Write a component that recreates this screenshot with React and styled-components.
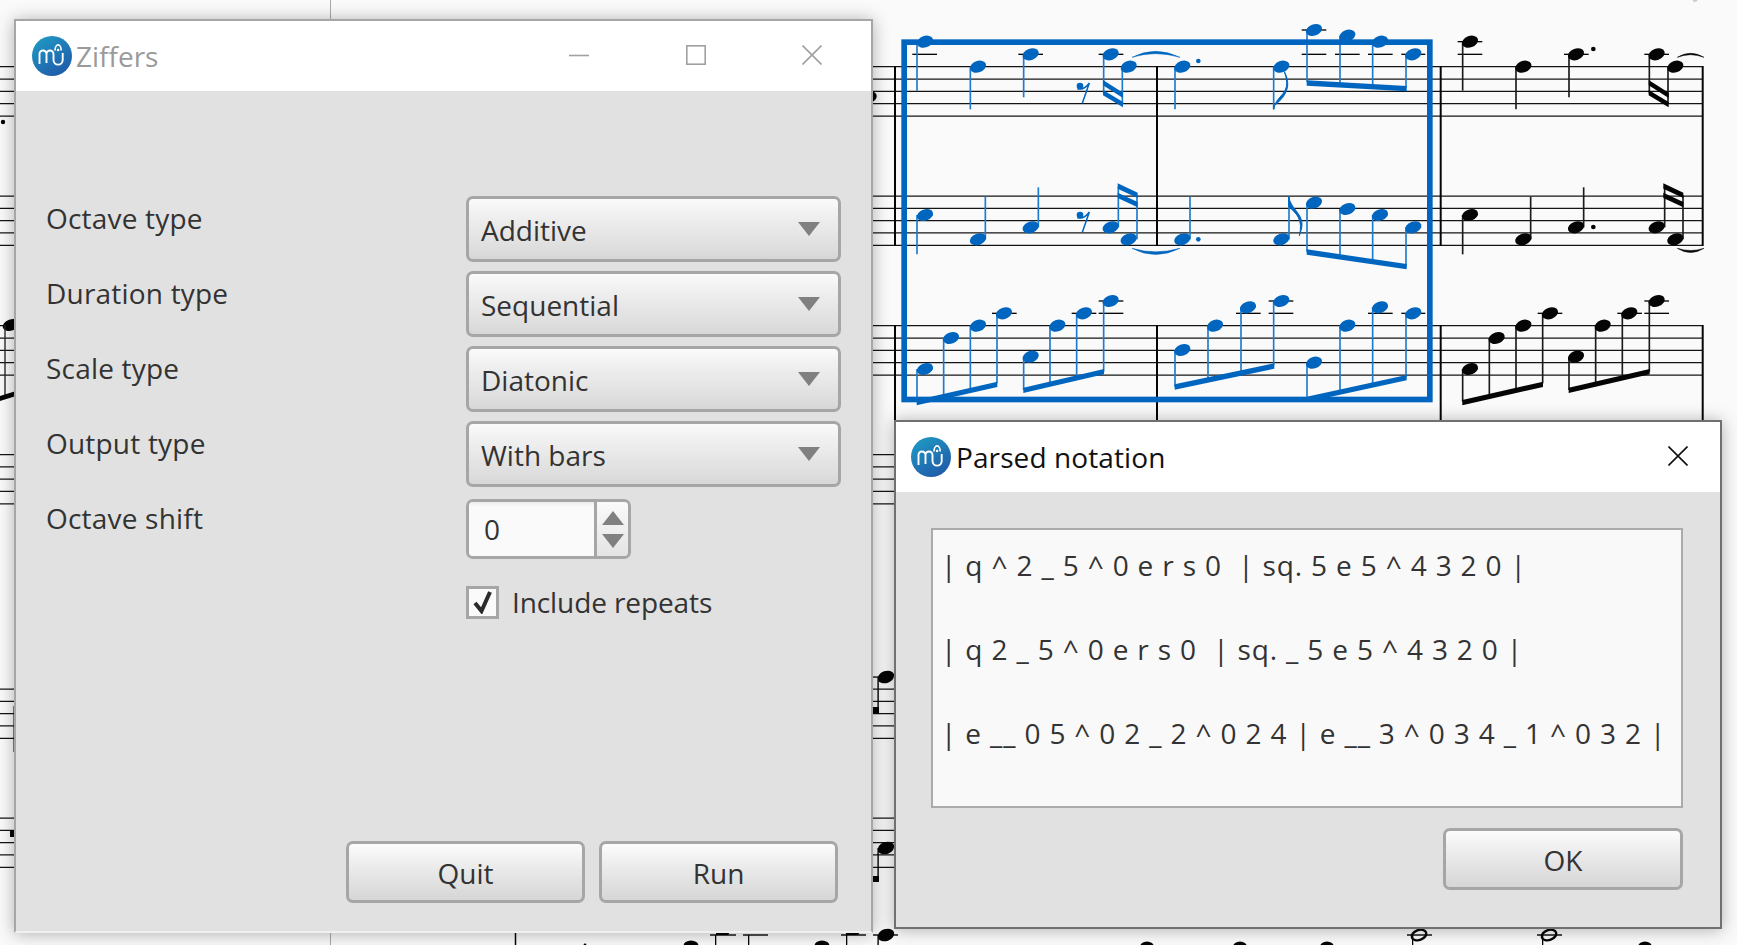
import React from "react";
import styled, { createGlobalStyle } from "styled-components";

const Global = createGlobalStyle`
  html, body { margin: 0; padding: 0; background: #fafafa; overflow: hidden; }
  * { box-sizing: border-box; }
`;

const Desktop = styled.div`
  position: relative;
  width: 1737px;
  height: 945px;
  overflow: hidden;
  background: #fafafa;
  font-family: "Open Sans", "Noto Sans", sans-serif;
  color: #333;
`;
const ScoreSvg = styled.svg`
  display: block;
`;
const Window = styled.section`
  position: absolute;
  left: ${(p) => p.$left}px;
  top: ${(p) => p.$top}px;
  width: ${(p) => p.$width}px;
  height: ${(p) => p.$height}px;
  display: flex;
  flex-direction: column;
  background: #e1e1e1;
  border: 2px solid ${(p) => p.$edge};
  border-bottom-color: ${(p) => p.$foot};
  box-shadow: 0 1px 16px rgba(0, 0, 0, 0.3);
`;
const TitleBar = styled.header`
  flex: none;
  height: 70px;
  display: flex;
  align-items: center;
  background: #fff;
  padding: 0 ${(p) => p.$padRight}px 0 ${(p) => p.$padLeft}px;
`;
const Title = styled.h1`
  margin: 0 0 0 ${(p) => p.$gap}px;
  font-size: 28px;
  font-weight: 400;
  letter-spacing: ${(p) => p.$track}px;
  color: ${(p) => p.$color};
`;
const WinControls = styled.div`
  margin-left: auto;
  display: flex;
  gap: ${(p) => p.$gap}px;
  margin-bottom: 3px;
`;
const Glyph = styled.svg`
  display: block;
  fill: none;
  stroke: ${(p) => p.$color};
  stroke-width: 1.6;
`;
const MainBody = styled.div`
  flex: 1;
  display: flex;
  flex-direction: column;
  padding: 105px 33px 28px 30px;
`;
const FormGrid = styled.div`
  display: grid;
  grid-template-columns: 420px 375px;
  grid-auto-rows: auto;
  row-gap: 9px;
`;
const FieldLabel = styled.div`
  font-size: 28px;
  line-height: 34px;
  letter-spacing: 0.2px;
  padding-top: 5px;
`;
const Select = styled.div`
  height: 66px;
  display: flex;
  align-items: center;
  justify-content: space-between;
  padding: 2px 18px 0 12px;
  border: 3px solid #a6a6a6;
  border-radius: 7px;
  font-size: 28px;
  background: linear-gradient(#fbfbfb, #f2f2f2 20%, #dcdcdc 88%, #d6d6d6);
`;
const Caret = styled.span`
  width: 0;
  height: 0;
  margin-bottom: 2px;
  border-left: 11px solid transparent;
  border-right: 11px solid transparent;
  border-top: 14px solid #808080;
`;
const Spinner = styled.div`
  width: 165px;
  height: 60px;
  margin-top: 3px;
  display: flex;
  border: 3px solid #a6a6a6;
  border-radius: 7px;
  overflow: hidden;
`;
const SpinValue = styled.div`
  width: 128px;
  display: flex;
  align-items: center;
  padding-left: 15px;
  font-size: 28px;
  background: linear-gradient(#ececec, #fafafa 8%);
  border-right: 3px solid #a6a6a6;
`;
const SpinArrows = styled.div`
  flex: 1;
  display: flex;
  flex-direction: column;
  align-items: center;
  justify-content: center;
  gap: 9px;
  background: linear-gradient(#fafafa, #e4e4e4);
`;
const ArrowUp = styled.span`
  width: 0;
  height: 0;
  border-left: 11px solid transparent;
  border-right: 11px solid transparent;
  border-bottom: 14px solid #808080;
`;
const ArrowDown = styled(ArrowUp)`
  border-bottom: 0;
  border-top: 14px solid #808080;
`;
const CheckRow = styled.div`
  grid-column: 2;
  margin-top: 15px;
  display: flex;
  align-items: center;
  gap: 13px;
  font-size: 28px;
  letter-spacing: -0.1px;
`;
const CheckBox = styled.span`
  flex: none;
  width: 33px;
  height: 33px;
  border: 3px solid #a6a6a6;
  background: #fafafa;
  display: flex;
  align-items: center;
  justify-content: center;
`;
const Footer = styled.div`
  margin-top: auto;
  display: flex;
  justify-content: flex-end;
  gap: 14px;
`;
const Button = styled.button`
  width: ${(p) => p.$w || 239}px;
  height: 62px;
  padding: 2px 0 0;
  border: 3px solid #a6a6a6;
  border-radius: 7px;
  font-family: inherit;
  font-size: 28px;
  color: #333;
  background: linear-gradient(#fcfcfc, #efefef 30%, #dadada 88%, #d6d6d6);
`;
const DialogBody = styled.div`
  flex: 1;
  display: flex;
  flex-direction: column;
  padding: 36px 37px 37px 35px;
`;
const ParsedBox = styled.div`
  flex: none;
  height: 280px;
  padding: 0 0 0 8px;
  display: flex;
  flex-direction: column;
  gap: 14px;
  border: 2px solid #ababab;
  background: #f9f9f9;
`;
const ParsedLine = styled.div`
  height: 70px;
  line-height: 70px;
  white-space: pre;
  font-size: 28px;
  letter-spacing: 0.85px;
  color: #333;
`;

const BLUE = "#0065bf";
const BLACK = "#050505";

const Logo = () => (
  <svg width="40" height="40" viewBox="0 0 40 40" style={{ flex: "none", display: "block" }}>
    <defs>
      <linearGradient id="lg" x1="0.15" y1="0" x2="0.8" y2="1">
        <stop offset="0" stopColor="#1f9ac4" />
        <stop offset="1" stopColor="#2058a8" />
      </linearGradient>
    </defs>
    <circle cx="20" cy="20" r="20" fill="url(#lg)" />
    <path
      d="M7.5 28V18a3.5 3.5 0 0 1 7 0v9M14.5 18a3.5 3.5 0 0 1 7 0v6a4.6 4.6 0 0 0 9.2 0V17"
      fill="none"
      stroke="#fff"
      strokeWidth="1.9"
    />
    <path d="M23 14.5a3.1 5.6 0 0 1 6.2 0" fill="none" stroke="#fff" strokeWidth="1.7" />
    <circle cx="26.1" cy="14" r="1.3" fill="#fff" />
  </svg>
);

const Head = ({ x, y, c }) => (
  <ellipse cx={x} cy={y} rx="25" ry="17" transform={`rotate(-20 ${x} ${y})`} fill={c} />
);

// [head x, head y, stem x, stem end y]
const blueNotes = [
  [135, 125, 111, 272], [294, 200, 271, 328], [452, 163, 431, 292], [692, 163, 671, 280], [746, 200, 727, 312],
  [907, 200, 885, 328], [1204, 200, 1181, 328], [1302, 90, 1281, 245], [1402, 107, 1380, 250], [1500, 125, 1478, 255], [1600, 163, 1578, 262],
  [135, 645, 111, 763], [294, 718, 316, 590], [452, 682, 475, 562], [692, 682, 715, 560], [746, 718, 771, 585],
  [907, 718, 930, 590], [1204, 718, 1227, 590], [1302, 608, 1281, 755], [1402, 627, 1380, 770], [1500, 645, 1478, 785], [1600, 682, 1578, 800],
  [135, 1107, 111, 1205], [213, 1014, 191, 1185], [294, 977, 271, 1170], [372, 940, 351, 1150],
  [452, 1070, 431, 1170], [532, 977, 510, 1150], [612, 940, 590, 1130], [692, 903, 671, 1115],
  [907, 1050, 885, 1160], [1005, 977, 984, 1135], [1104, 922, 1083, 1115], [1204, 903, 1181, 1095],
  [1302, 1088, 1281, 1190], [1402, 977, 1380, 1170], [1500, 922, 1478, 1150], [1600, 940, 1578, 1130],
];
const blackNotes = [
  [1770, 125, 1748, 272], [1930, 200, 1908, 328], [2088, 163, 2067, 292], [2330, 163, 2308, 280], [2386, 200, 2364, 312],
  [1770, 645, 1748, 763], [1930, 718, 1952, 590], [2088, 682, 2111, 562], [2330, 682, 2354, 560], [2386, 718, 2409, 585],
  [1770, 1107, 1748, 1205], [1850, 1014, 1828, 1185], [1930, 977, 1908, 1170], [2010, 940, 1988, 1150],
  [2088, 1070, 2067, 1170], [2168, 977, 2147, 1150], [2248, 940, 2227, 1130], [2330, 903, 2308, 1115],
];
const ledgers = [
  [97, 171, 163], [415, 489, 163], [656, 730, 163], [1265, 1339, 163], [1365, 1439, 163], [1464, 1538, 163], [1564, 1636, 163],
  [1265, 1339, 90], [336, 410, 940], [575, 649, 940], [656, 730, 940], [656, 730, 903], [1068, 1142, 940], [1166, 1240, 940], [1166, 1240, 903],
  [1464, 1538, 940], [1564, 1636, 940],
  [1733, 1807, 125], [1733, 1807, 163], [2052, 2126, 163], [2293, 2367, 163],
  [1973, 2047, 940], [2212, 2286, 940], [2293, 2367, 940], [2293, 2367, 903],
];
const beam = (x1, y1, x2, y2, t = 16) => `${x1},${y1} ${x2},${y2} ${x2},${y2 + t} ${x1},${y1 + t}`;
const beamsBlue = [
  beam(669, 240, 729, 278), beam(669, 270, 729, 306), beam(713, 550, 773, 578), beam(713, 578, 773, 606),
  beam(1280, 241, 1580, 258), beam(1280, 748, 1580, 792),
  beam(110, 1200, 352, 1145), beam(430, 1163, 672, 1107), beam(884, 1153, 1183, 1090), beam(1280, 1190, 1580, 1125),
];
const beamsBlack = [
  beam(2306, 240, 2366, 278), beam(2306, 270, 2366, 306), beam(2350, 550, 2410, 578), beam(2350, 578, 2410, 606),
  beam(1747, 1200, 1989, 1145), beam(2066, 1163, 2309, 1107),
];
const STAVES = [66.7, 196, 325.7, 454.5, 689, 818];

const Rest = ({ y }) => (
  <g>
    <circle cx="600" cy={y} r="10" fill={BLUE} />
    <path d={`M592 ${y + 8}Q612 ${y + 14} 628 ${y - 9}L607 ${y + 52}`} fill="none" stroke={BLUE} strokeWidth="4.5" />
  </g>
);

const Score = () => (
  <ScoreSvg width="1737" height="945" viewBox="0 0 1737 945">
    {STAVES.map((top) =>
      [0, 1, 2, 3, 4].map((i) => (
        <line key={`${top}${i}`} x1="0" x2="1703" y1={top + i * 12.33} y2={top + i * 12.33} stroke="#141414" strokeWidth="1.25" />
      ))
    )}
    {[895, 1157, 1440.7, 1702.7].map((x) => (
      <g key={x} stroke={BLACK} strokeWidth="2">
        <line x1={x} x2={x} y1="66" y2="246" />
        <line x1={x} x2={x} y1="325" y2="425" />
      </g>
    ))}
    <line x1="330.5" x2="330.5" y1="0" y2="945" stroke="#aaa" strokeWidth="1" />
    <line x1="515.5" x2="515.5" y1="600" y2="945" stroke={BLACK} strokeWidth="1.5" />

    <g transform="translate(880 0) scale(0.33333)">
      {ledgers.map(([a, b, y]) => (
        <line key={`${a}${y}`} x1={a} x2={b} y1={y} y2={y} stroke={BLACK} strokeWidth="4" />
      ))}
      {blackNotes.map(([x, y, sx, e]) => (
        <g key={`${x}${y}`}>
          <line x1={sx} x2={sx} y1={y} y2={e} stroke="#1c1c1c" strokeWidth="5" />
          <Head x={x} y={y} c={BLACK} />
        </g>
      ))}
      {beamsBlack.map((p) => (
        <polygon key={p} points={p} fill={BLACK} />
      ))}
      <circle cx="2140" cy="147" r="7" fill={BLACK} />
      <circle cx="2140" cy="681" r="7" fill={BLACK} />
      <path d="M2392 172Q2432 148 2472 172Q2432 156 2392 172Z" fill={BLACK} stroke={BLACK} strokeWidth="1.5" />
      <path d="M2392 745Q2432 770 2472 745Q2432 758 2392 745Z" fill={BLACK} stroke={BLACK} strokeWidth="1.5" />

      {blueNotes.map(([x, y, sx, e]) => (
        <g key={`${x}${y}`}>
          <line x1={sx} x2={sx} y1={y} y2={e} stroke="#1f7ccd" strokeWidth="5" />
          <Head x={x} y={y} c={BLUE} />
        </g>
      ))}
      {beamsBlue.map((p) => (
        <polygon key={p} points={p} fill={BLUE} />
      ))}
      <Rest y={258} />
      <Rest y={645} />
      <circle cx="955" cy="183" r="7" fill={BLUE} />
      <circle cx="955" cy="718" r="7" fill={BLUE} />
      <path d="M756 172Q826 136 900 172Q826 150 756 172Z" fill={BLUE} stroke={BLUE} strokeWidth="1.5" />
      <path d="M756 745Q826 782 900 745Q826 766 756 745Z" fill={BLUE} stroke={BLUE} strokeWidth="1.5" />
      <path d="M1181 328C1186 290 1222 285 1220 248C1220 235 1216 225 1213 215C1232 250 1226 285 1181 318Z" fill={BLUE} stroke={BLUE} strokeWidth="3" />
      <path d="M1226 590C1232 625 1266 640 1266 672C1266 685 1262 695 1258 707C1270 660 1250 640 1226 620Z" fill={BLUE} stroke={BLUE} strokeWidth="3" />
      <rect x="72.5" y="126.5" width="1577" height="1072" fill="none" stroke={BLUE} strokeWidth="17" />
    </g>

    {/* other systems, seen beside and below the windows */}
    <g fill={BLACK} stroke="none">
      <circle cx="3" cy="122" r="2.2" />
      <ellipse cx="869" cy="97.5" rx="8" ry="5.6" transform="rotate(-20 869 97.5)" />
      <ellipse cx="11" cy="325" rx="8.5" ry="5.6" transform="rotate(-20 11 325)" />
      <rect x="4.3" y="325" width="1.4" height="70" fill="#2a2a2a" />
      <polygon points="0,396 16,391 16,396 0,401" />
      <rect x="13.5" y="706" width="2" height="46" />
      <rect x="10" y="830" width="6" height="7" />
      <ellipse cx="886" cy="677" rx="8.5" ry="6" transform="rotate(-20 886 677)" />
      <rect x="873" y="676.4" width="8" height="1.3" />
      <rect x="877.4" y="677" width="1.4" height="36" />
      <rect x="872" y="707" width="7" height="6.5" />
      <ellipse cx="886" cy="848" rx="8.5" ry="6" transform="rotate(-20 886 848)" />
      <rect x="877.4" y="848" width="1.4" height="33" />
      <rect x="872" y="876" width="7" height="6" />
      <ellipse cx="886" cy="935" rx="8.5" ry="6" transform="rotate(-20 886 935)" />
      <rect x="873" y="934.3" width="25" height="1.4" />
      <rect x="877.4" y="935" width="1.4" height="10" />
      <ellipse cx="691" cy="946" rx="7.5" ry="5.5" />
      <ellipse cx="822" cy="946" rx="7.5" ry="5.5" />
      <circle cx="585" cy="945" r="1.4" />
      <rect x="710" y="934.3" width="26" height="1.4" />
      <polygon points="716,932 730,932 728,935 716,935" />
      <rect x="715" y="935" width="1.3" height="10" />
      <rect x="743" y="934.3" width="25" height="1.4" />
      <rect x="748" y="935" width="1.3" height="10" />
      <rect x="841" y="934.3" width="25" height="1.4" />
      <polygon points="846,932 860,932 858,935 846,935" />
      <rect x="846" y="935" width="1.3" height="10" />
      <ellipse cx="1147" cy="947" rx="7" ry="5.5" />
      <ellipse cx="1240" cy="947" rx="7" ry="5.5" />
      <ellipse cx="1327" cy="947" rx="7" ry="5.5" />
      <ellipse cx="1645" cy="947" rx="7" ry="5.5" />
      <rect x="1407" y="934.3" width="25" height="1.4" />
      <rect x="1537" y="934.3" width="25" height="1.4" />
      <rect x="1412" y="935" width="1.3" height="10" />
      <rect x="1542" y="935" width="1.3" height="10" />
    </g>
    <ellipse cx="1419" cy="935" rx="7.5" ry="5" fill="none" stroke={BLACK} strokeWidth="2.4" transform="rotate(-20 1419 935)" />
    <ellipse cx="1549" cy="935" rx="7.5" ry="5" fill="none" stroke={BLACK} strokeWidth="2.4" transform="rotate(-20 1549 935)" />
    <circle cx="1695" cy="-0.5" r="2.5" fill="#ccc" />
  </ScoreSvg>
);

const fields = [
  ["Octave type", "Additive"],
  ["Duration type", "Sequential"],
  ["Scale type", "Diatonic"],
  ["Output type", "With bars"],
];
const parsed = [
  "| q ^ 2 _ 5 ^ 0 e r s 0  | sq. 5 e 5 ^ 4 3 2 0 |",
  "| q 2 _ 5 ^ 0 e r s 0  | sq. _ 5 e 5 ^ 4 3 2 0 |",
  "| e __ 0 5 ^ 0 2 _ 2 ^ 0 2 4 | e __ 3 ^ 0 3 4 _ 1 ^ 0 3 2 |",
];

export default function App() {
  return (
    <Desktop>
      <Global />
      <Score />

      <Window $left={14} $top={19} $width={859} $height={914} $edge="#a6a6a6" $foot="#f0f0f0">
        <TitleBar $padLeft={16} $padRight={49}>
          <Logo />
          <Title $gap={4} $track={0} $color="#9a9a9a">Ziffers</Title>
          <WinControls $gap={96.5}>
            <Glyph width="20" height="20" viewBox="0 0 20 20" $color="#a0a0a0">
              <path d="M0 10.5H20" />
            </Glyph>
            <Glyph width="20" height="20" viewBox="0 0 20 20" $color="#a0a0a0">
              <rect x="0.8" y="0.8" width="18.4" height="18.4" />
            </Glyph>
            <Glyph width="20" height="20" viewBox="0 0 20 20" $color="#a0a0a0">
              <path d="M0.5 0.5L19.5 19.5M19.5 0.5L0.5 19.5" />
            </Glyph>
          </WinControls>
        </TitleBar>
        <MainBody>
          <FormGrid>
            {fields.map(([label, value]) => (
              <React.Fragment key={label}>
                <FieldLabel>{label}</FieldLabel>
                <Select>
                  {value}
                  <Caret />
                </Select>
              </React.Fragment>
            ))}
            <FieldLabel>Octave shift</FieldLabel>
            <Spinner>
              <SpinValue>0</SpinValue>
              <SpinArrows>
                <ArrowUp />
                <ArrowDown />
              </SpinArrows>
            </Spinner>
            <CheckRow>
              <CheckBox>
                <svg width="22" height="24" viewBox="0 0 22 24">
                  <path d="M3 13L9.5 21L18 2" fill="none" stroke="#2a2a2a" strokeWidth="4" />
                </svg>
              </CheckBox>
              Include repeats
            </CheckRow>
          </FormGrid>
          <Footer>
            <Button>Quit</Button>
            <Button>Run</Button>
          </Footer>
        </MainBody>
      </Window>

      <Window $left={894} $top={420} $width={828} $height={509} $edge="#707070" $foot="#707070">
        <TitleBar $padLeft={15} $padRight={32}>
          <Logo />
          <Title $gap={5} $track={0.1} $color="#111">Parsed notation</Title>
          <WinControls $gap={0}>
            <Glyph width="20" height="20" viewBox="0 0 20 20" $color="#111">
              <path d="M0.5 0.5L19.5 19.5M19.5 0.5L0.5 19.5" />
            </Glyph>
          </WinControls>
        </TitleBar>
        <DialogBody>
          <ParsedBox>
            {parsed.map((line) => (
              <ParsedLine key={line}>{line}</ParsedLine>
            ))}
          </ParsedBox>
          <Footer>
            <Button $w={240}>OK</Button>
          </Footer>
        </DialogBody>
      </Window>
    </Desktop>
  );
}
